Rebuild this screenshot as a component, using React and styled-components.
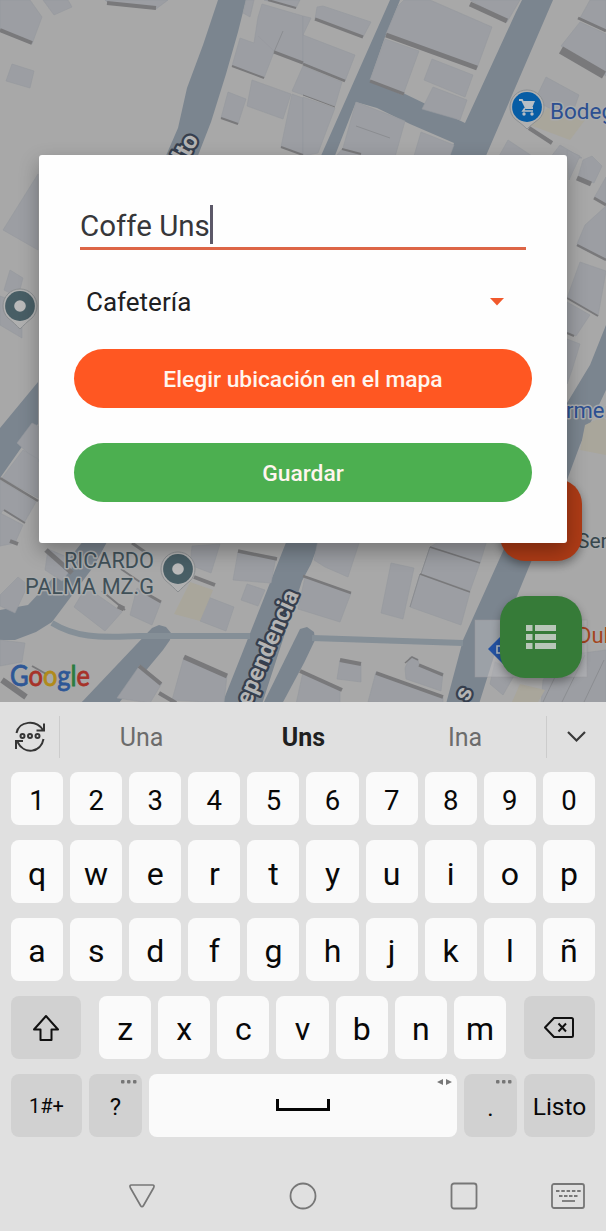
import React from "react";
import styled, { createGlobalStyle } from "styled-components";

const GlobalStyle = createGlobalStyle`
  * { box-sizing: border-box; }
  body { margin: 0; background: #e0e0e0; font-family: Roboto, "Liberation Sans", sans-serif; }
  button, input { font-family: inherit; }
`;

const Screen = styled.main`
  width: 606px;
  height: 1231px;
  display: flex;
  flex-direction: column;
  overflow: hidden;
  background: #e0e0e0;
`;

const MapArea = styled.section`
  position: relative;
  height: 702px;
  flex: none;
  overflow: hidden;
  display: flex;
  align-items: flex-start;
  justify-content: center;
  padding-top: 155px;
`;

const MapCanvas = styled.svg`
  position: absolute;
  inset: 0;
  font-family: Roboto, "Liberation Sans", sans-serif;
`;

const Road = styled.polygon`
  fill: #7b858f;
`;

const Roof = styled.polygon`
  fill: ${(p) => p.$tint || "#9c9ea3"};
  stroke: #96989d;
  stroke-width: 0.6;
`;

const Wall = styled.polyline`
  fill: none;
  stroke: #79797b;
  stroke-width: ${(p) => p.$w || 2};
`;

const PlaceLabel = styled.text`
  font-size: ${(p) => p.$size || 24}px;
  fill: ${(p) => p.$color};
  stroke: #a9abac;
  stroke-width: 3px;
  stroke-linejoin: round;
  paint-order: stroke;
`;

const StreetLabel = styled.text`
  font-size: 24px;
  font-weight: 700;
  fill: #b4b4b4;
  stroke: #363f4e;
  stroke-width: 4.5px;
  stroke-linejoin: round;
  paint-order: stroke;
`;

const Fab = styled.button`
  position: absolute;
  left: 500px;
  top: ${(p) => p.$top}px;
  width: 82px;
  height: 82px;
  padding: 0;
  border: 0;
  border-radius: 25px;
  background: ${(p) => p.$color};
  display: grid;
  place-items: center;
  box-shadow: 0 4px 8px rgba(0, 0, 0, 0.32);
`;

const Dialog = styled.form`
  position: relative;
  width: 528px;
  height: 388px;
  padding: 46px 35px 0;
  border-radius: 3px;
  background: #fefefe;
  display: flex;
  flex-direction: column;
  box-shadow: 0 8px 20px rgba(0, 0, 0, 0.3);
`;

const NameField = styled.div`
  height: 49px;
  margin: 0 6px;
  padding-top: 4px;
  display: flex;
  align-items: flex-start;
  border-bottom: 3px solid #dd6546;
  color: #37373a;
  font-size: 29.5px;
  line-height: 42px;
  white-space: pre;
`;

const Caret = styled.span`
  width: 3px;
  height: 39px;
  background: #5c5868;
`;

const Select = styled.div`
  height: 70px;
  margin-top: 17px;
  padding: 0 28px 0 12px;
  display: flex;
  align-items: center;
  justify-content: space-between;
  color: #202022;
  font-size: 26px;
`;

const Action = styled.button`
  height: 59px;
  flex: none;
  margin: ${(p) => p.$gap}px 0 0;
  border: 0;
  border-radius: 30px;
  background: ${(p) => p.$color};
  color: #fff5ee;
  font-size: 22.8px;
  font-weight: 500;
  line-height: 59px;
`;

const Keyboard = styled.section`
  height: 458px;
  flex: none;
  padding: 0 11px;
  display: flex;
  flex-direction: column;
`;

const Suggestions = styled.div`
  height: 70px;
  margin: 0 -11px;
  display: grid;
  grid-template-columns: 60px 163px 161px 162px 60px;
  align-items: center;
`;

const Suggestion = styled.span`
  text-align: center;
  font-size: 25px;
  font-weight: ${(p) => (p.$strong ? 700 : 400)};
  color: ${(p) => (p.$strong ? "#202020" : "#6c6c6c")};
`;

const ToolSlot = styled.span`
  height: 42px;
  display: grid;
  place-items: center;
  ${(p) => (p.$side === "left" ? "border-right" : "border-left")}: 1px solid #cccccc;
`;

const KeyRow = styled.div`
  display: flex;
  gap: 7px;
  height: ${(p) => (p.$short ? 53 : 63)}px;
  margin-bottom: 15px;
  padding: 0;
  flex: none;
`;

const LetterGroup = styled.div`
  flex: none;
  width: 407px;
  margin: 0 11px;
  display: flex;
  gap: 7px;
`;

const Key = styled.button`
  position: relative;
  flex: ${(p) => (p.$width ? `0 0 ${p.$width}px` : "1 1 0")};
  min-width: 0;
  height: 100%;
  padding: ${(p) => p.$drop ?? 4}px 0 0;
  border: 0;
  border-radius: 8px;
  background: ${(p) => (p.$muted ? "#d1d1d1" : "#fafafa")};
  color: #080808;
  display: flex;
  align-items: center;
  justify-content: center;
  font-size: ${(p) => p.$size || 32}px;
  line-height: 1;
`;

const Hint = styled.svg`
  position: absolute;
  top: 5px;
  right: 5px;
`;

const NavBar = styled.nav`
  height: 71px;
  flex: none;
  display: grid;
  grid-template-columns: 61px 161px 161px 161px 48px;
  align-items: center;
  justify-items: center;
  & > :first-child { grid-column: 2; }
`;

const roads = [
  "218,0 246,0 238,32 226,74 211,122 197,158 165,158 178,128 187,88 203,45",
  "390,0 400,0 385,37 370,80 388,86 403,93 465,123 516,12 522,0 553,0 485,158 449,158 454,143 410,124 377,108 356,102 334,158 320,158",
  "606,325 590,365 567,403 567,480 580,445 606,390",
  "38,382 0,428 0,478 28,438 38,424",
  "84,540 108,540 94,566 70,598 52,622 36,632 15,640 0,640 0,610 28,605 43,589 60,570",
  "152,628 159,625 166,627 171,633 170,640 163,650 118,704 80,704",
  "287,540 320,540 311,564 302,581 262,704 222,704",
  "300,629 307,627 314,632 315,640 304,663 282,704 263,704",
  "508,540 540,540 531,562 500,637 479,704 446,704 463,640",
];

const roofs = [
  "0,0 30,0 42,17 32,44 0,31", "43,0 68,0 72,7 54,15", "105,0 168,0 156,9 109,4",
  "12,64 34,71 30,88 6,81", "246,0 254,0 250,17 243,13", "264,0 300,0 296,8",
  "262,4 303,16 303,63 274,52 264,78 232,66 240,38 254,43 258,17",
  "252,80 291,94 283,119 247,106", "228,92 246,99 238,124 221,118", "292,94 303,98 303,155 281,147",
  "303,16 311,18 303,35 355,55 345,81 303,63", "303,66 342,82 335,106 303,95 292,91",
  "303,97 335,108 318,153 303,156", "317,7 323,6 371,22 363,37 315,19",
  "398,6 404,0 430,0 492,27 477,68 386,34", "385,39 419,51 403,95 370,80",
  "432,59 473,75 465,97 424,80", "433,87 467,100 460,120 422,109", "470,0 520,0 507,22",
  "356,102 405,121 395,157 337,155 343,148", "421,132 454,145 449,158 414,156",
  "590,0 606,0 606,31 580,18", "580,22 606,34 606,76 561,46", "546,77 579,95 570,120 535,100",
  "508,140 535,158 498,158", "560,145 582,158 550,158",
  "567,150 580,156 569,180", "583,160 592,156 602,166 594,183 578,177", "606,177 594,198 606,205",
  "606,206 585,225 577,244 606,260", "580,262 606,271 598,316 567,298", "567,302 590,315 576,336 567,333",
  "567,339 580,344 572,370 567,384", "38,174 3,230 38,250", "10,270 23,278 18,297 4,290",
  "0,296 22,304 22,338 0,325", "32,423 38,426 38,462 17,443", "23,450 38,459 38,498 2,478",
  "0,480 36,502 24,523 3,510 0,515", "0,513 23,525 15,543 0,546",
  "0,595 18,577 28,585 15,613 0,606", "0,640 25,643 22,662 0,666",
  "48,549 77,561 62,581 45,570", "86,587 122,612 105,631 74,607", "137,588 161,602 152,625 130,615",
  "192,546 220,544 211,573 190,565", "238,552 276,557 271,583 233,580", "247,584 265,590 258,606 241,600",
  "208,597 234,607 226,631 200,621", "184,657 227,675 224,703 172,700", "140,665 162,683 150,703 117,698",
  "318,540 360,540 348,577 325,567 314,560", "305,577 351,593 340,622 298,609",
  "391,563 414,568 403,619 381,613", "442,540 487,540 480,563 430,547",
  "430,547 480,563 470,591 421,574", "420,574 470,592 461,625 410,607",
  "340,660 361,664 361,682 337,679", "376,672 443,697 443,704 368,702",
  "405,668 410,657 418,659 419,665 443,673 441,691 406,679", "303,672 340,689 340,704 296,704",
  "543,680 560,656 606,650 606,704 541,704", "495,662 516,672 503,695 490,684",
];

const walls = [
  ["0,30 32,43", 4], ["107,3 156,8", 4], ["232,66 264,78", 2],
  ["274,52 303,63", 3], ["268,0 296,8"], ["221,118 238,124"], ["281,147 303,155"],
  ["303,64 345,81", 2.5], ["303,95 335,107", 1], ["315,19 363,37", 3], ["386,35 477,68", 5],
  ["370,81 404,94", 3], ["470,4 507,21", 5], ["578,18 606,31", 3], ["561,50 604,75", 8],
  ["529,128 552,143", 4], ["342,149 361,154"], ["577,178 591,184", 5], ["594,198 606,205", 3],
  ["577,245 606,260", 2.5], ["567,298 598,316"], ["567,333 574,336"], ["0,478 38,501", 2.5],
  ["4,510 25,523"], ["10,541 18,544", 4], ["46,550 72,573", 5], ["102,591 125,610", 2], ["118,606 124,609", 5],
  ["140,590 161,602", 3], ["194,577 215,585", 4], ["238,551 277,559", 3.5], ["184,657 227,676", 5],
  ["139,666 161,684", 4], ["159,693 176,703", 4], ["2,680 26,697", 6],
  ["32,666 48,675"], ["303,576 351,593", 2.5], ["420,574 470,592", 1.5], ["430,547 480,563", 1.5],
  ["340,660 361,664", 4], ["376,673 443,697", 3.5], ["405,663 412,657 418,660", 1.5],
  ["419,665 443,675", 3], ["300,671 342,690", 4], ["132,543 148,554", 3], ["121,569 140,582", 2],
  ["258,36 274,51", 0.1],
];

const seams = "M274 52L283 31M543 702L566 654M562 702L585 655M584 702L604 660M421 574L430 547M410 607L420 574M356 126L390 138";

function RingPin({ x, y }) {
  return (
    <g transform={`translate(${x} ${y})`}>
      <path d="M0 23C-3 20-8 15-12 12A17 17 0 1 1 12 12C8 15 3 20 0 23Z" fill="#b0b0b0" stroke="#8b8e90" />
      <circle r="14.9" fill="#485e65" />
      <circle r="5.8" fill="#bababa" />
    </g>
  );
}

function CityMap() {
  return (
    <MapCanvas width="606" height="702" viewBox="0 0 606 702" aria-label="Mapa">
      <rect width="606" height="702" fill="#a8a8a8" />
      {roads.map((points) => <Road key={points} points={points} />)}
      <path d="M52 623C75 637 96 638 140 636H250M312 638L463 643" fill="none" stroke="#858f97" strokeWidth="6" />
      {roofs.map((points) => <Roof key={points} points={points} />)}
      <g fill="#a9a69b">
        <polygon points="548,108 585,120 570,140 530,125" />
        <polygon points="585,425 606,415 606,455 580,450" />
        <polygon points="190,582 213,590 200,621 174,614" />
        <polygon points="520,684 545,690 538,702 512,702" />
      </g>
      <path d={seams} fill="none" stroke="#8b8d91" />
      {walls.map(([points, w]) => <Wall key={points} points={points} $w={w} />)}

      <StreetLabel transform="translate(199 139) rotate(-62)" textAnchor="end">lto</StreetLabel>
      <StreetLabel transform="translate(299 594) rotate(-66.5)" textAnchor="end" textLength="123">ependencia</StreetLabel>
      <StreetLabel transform="translate(473 691) rotate(-66)" textAnchor="end">s</StreetLabel>

      <g transform="translate(527 107)">
        <path d="M0 22C-4 18-8 15-12 12A17 17 0 1 1 12 12C8 15 4 18 0 22Z" fill="#b0b0b0" stroke="#8d9092" />
        <circle r="14.9" fill="#075da5" />
        <path d="M-8-7h3l4 8h7" fill="none" stroke="#b7bec5" strokeWidth="1.8" />
        <path d="M-4-6H8L5 1H-1Z" fill="#b7bec5" />
        <path d="M-2 1l-2 3H6" fill="none" stroke="#b7bec5" strokeWidth="1.7" />
        <circle cx="-3" cy="7" r="1.7" fill="#b7bec5" /><circle cx="5" cy="7" r="1.7" fill="#b7bec5" />
      </g>
      <PlaceLabel x="550" y="119" $color="#2c4f91" $size={22.5}>Bodeg</PlaceLabel>
      <PlaceLabel x="566" y="418" $color="#2c4f91" $size={22}>rmer</PlaceLabel>
      <PlaceLabel x="577" y="548" $color="#37474d" $size={21}>Ser</PlaceLabel>
      <PlaceLabel x="64" y="568" textLength="90" lengthAdjust="spacingAndGlyphs" $color="#405058" $size={22}>RICARDO</PlaceLabel>
      <PlaceLabel x="25" y="594" textLength="129" lengthAdjust="spacingAndGlyphs" $color="#405058" $size={22}>PALMA MZ.G</PlaceLabel>
      <RingPin x={20} y={306} />
      <RingPin x={178} y={569} />
      <rect x="475" y="620" width="112" height="57" fill="#b8b8bb" fillOpacity=".55" stroke="#99999c" strokeOpacity=".5" />
      <path d="M488 649L503 634V664Z" fill="#2352a3" />
      <rect x="497" y="646" width="5" height="7" fill="none" stroke="#b7bec5" strokeWidth="1.5" />
      <PlaceLabel x="577" y="643" $color="#a4451d" $size={22}>Dul</PlaceLabel>

      <text x="10" y="686" fontFamily="Lato, sans-serif" fontSize="28" fontWeight="400" textLength="80" lengthAdjust="spacingAndGlyphs" strokeWidth=".8">
        <tspan fill="#2e5796" stroke="#2e5796">G</tspan><tspan fill="#a63229" stroke="#a63229">o</tspan><tspan fill="#b18a1a" stroke="#b18a1a">o</tspan><tspan fill="#2e5796" stroke="#2e5796">g</tspan><tspan fill="#2b7c40" stroke="#2b7c40">l</tspan><tspan fill="#a63229" stroke="#a63229">e</tspan>
      </text>
    </MapCanvas>
  );
}

function MoreHint() {
  return (
    <Hint width="16" height="6" viewBox="0 0 16 6" fill="#767676">
      <rect x="0" y="1" width="3.5" height="3.5" rx="1" /><rect x="6" y="1" width="3.5" height="3.5" rx="1" /><rect x="12" y="1" width="3.5" height="3.5" rx="1" />
    </Hint>
  );
}

export default function App() {
  return (
    <Screen>
      <GlobalStyle />
      <MapArea>
        <CityMap />
        <Fab type="button" aria-label="Agregar" $top={479} $color="#ad3b16" />
        <Fab type="button" aria-label="Lista" $top={596} $color="#367b38">
          <svg width="30" height="24" viewBox="0 0 30 24" fill="#b8c6b8">
            {[0, 9, 18].map((y) => <g key={y}><rect y={y} width="6.5" height="6" /><rect x="9" y={y} width="21" height="6" /></g>)}
          </svg>
        </Fab>
        <Dialog>
          <NameField>Coffe Uns<Caret /></NameField>
          <Select>
            Cafetería
            <svg width="14" height="8" viewBox="0 0 14 8"><path d="M0 0H14L7 7.5Z" fill="#f1592c" /></svg>
          </Select>
          <Action type="button" $color="#ff5722" $gap={12}>Elegir ubicación en el mapa</Action>
          <Action type="button" $color="#4caf50" $gap={35}>Guardar</Action>
        </Dialog>
      </MapArea>

      <Keyboard>
        <Suggestions>
          <ToolSlot $side="left">
            <svg width="32" height="32" viewBox="0 0 32 32" fill="none" stroke="#353535" strokeWidth="2">
              <path d="M2.5 12C5 0 22-2 29 9M30 2.5V9.5H22.5M29.5 18C27 32 10 34 3.5 21M2 28V20H9" />
              <circle cx="8.5" cy="15" r="2" /><circle cx="16" cy="15" r="2" /><circle cx="23.5" cy="15" r="2" />
            </svg>
          </ToolSlot>
          <Suggestion>Una</Suggestion>
          <Suggestion $strong>Uns</Suggestion>
          <Suggestion>Ina</Suggestion>
          <ToolSlot>
            <svg width="19" height="12" viewBox="0 0 19 12"><path d="M1 1L9.5 9.5L18 1" fill="none" stroke="#3a3a3a" strokeWidth="2.2" /></svg>
          </ToolSlot>
        </Suggestions>
        <KeyRow $short>{[..."1234567890"].map((k) => <Key key={k} $size={27.5} $drop={4}>{k}</Key>)}</KeyRow>
        <KeyRow>{[..."qwertyuiop"].map((k) => <Key key={k}>{k}</Key>)}</KeyRow>
        <KeyRow>{[..."asdfghjklñ"].map((k) => <Key key={k} $drop={3}>{k}</Key>)}</KeyRow>
        <KeyRow>
          <Key $muted $width={70} $drop={0} aria-label="Mayúsculas">
            <svg width="28" height="28" viewBox="0 0 28 28"><path d="M14 2L26 15.5H19.5V26H8.5V15.5H2Z" fill="none" stroke="#111" strokeWidth="2" strokeLinejoin="round" /></svg>
          </Key>
          <LetterGroup>{[..."zxcvbnm"].map((k) => <Key key={k} $drop={3}>{k}</Key>)}</LetterGroup>
          <Key $muted $width={71} $drop={0} aria-label="Borrar">
            <svg width="31" height="22" viewBox="0 0 31 22" fill="none" stroke="#111" strokeWidth="2"><path d="M10 1H27.5Q29 1 29 2.5V18.5Q29 20 27.5 20H10L1 10.5Z" strokeLinejoin="round" /><path d="M14.5 6.5L22 14.5M22 6.5L14.5 14.5" /></svg>
          </Key>
        </KeyRow>
        <KeyRow>
          <Key $muted $width={71} $drop={1} $size={20}>1#+</Key>
          <Key $muted $width={53} $drop={3} $size={24}>?<MoreHint /></Key>
          <Key $drop={0} aria-label="Espacio">
            <svg width="54" height="13" viewBox="0 0 54 13"><path d="M1.5 0V10.5H52.5V0" fill="none" stroke="#050505" strokeWidth="3" /></svg>
            <Hint width="15" height="6" viewBox="0 0 15 6" fill="#777"><path d="M6 0V6L0 3ZM9 0V6L15 3Z" /></Hint>
          </Key>
          <Key $muted $width={53} $drop={4} $size={24}>.<MoreHint /></Key>
          <Key $muted $width={71} $drop={3} $size={24.5}>Listo</Key>
        </KeyRow>
      </Keyboard>
      <NavBar>
        <svg width="28" height="24" viewBox="0 0 28 24"><path d="M3.5 1H24.5Q27 1 25.5 4L15.5 21.5Q14 24 12.5 21.5L2.5 4Q1 1 3.5 1Z" fill="none" stroke="#777" strokeWidth="1.7" /></svg>
        <svg width="28" height="28"><circle cx="14" cy="14" r="12.5" fill="none" stroke="#777" strokeWidth="1.8" /></svg>
        <svg width="28" height="28"><rect x="1.5" y="1.5" width="25" height="25" rx="2.5" fill="none" stroke="#777" strokeWidth="1.8" /></svg>
        <svg width="34" height="26" viewBox="0 0 34 26" fill="none" stroke="#777" strokeWidth="1.8"><rect x="1" y="1" width="32" height="24" rx="2" /><path d="M5 8H30" strokeDasharray="3.5 1.8" /><path d="M8 13H27" strokeDasharray="3.5 1.5" /><path d="M11 18H24" /></svg>
      </NavBar>
    </Screen>
  );
}
